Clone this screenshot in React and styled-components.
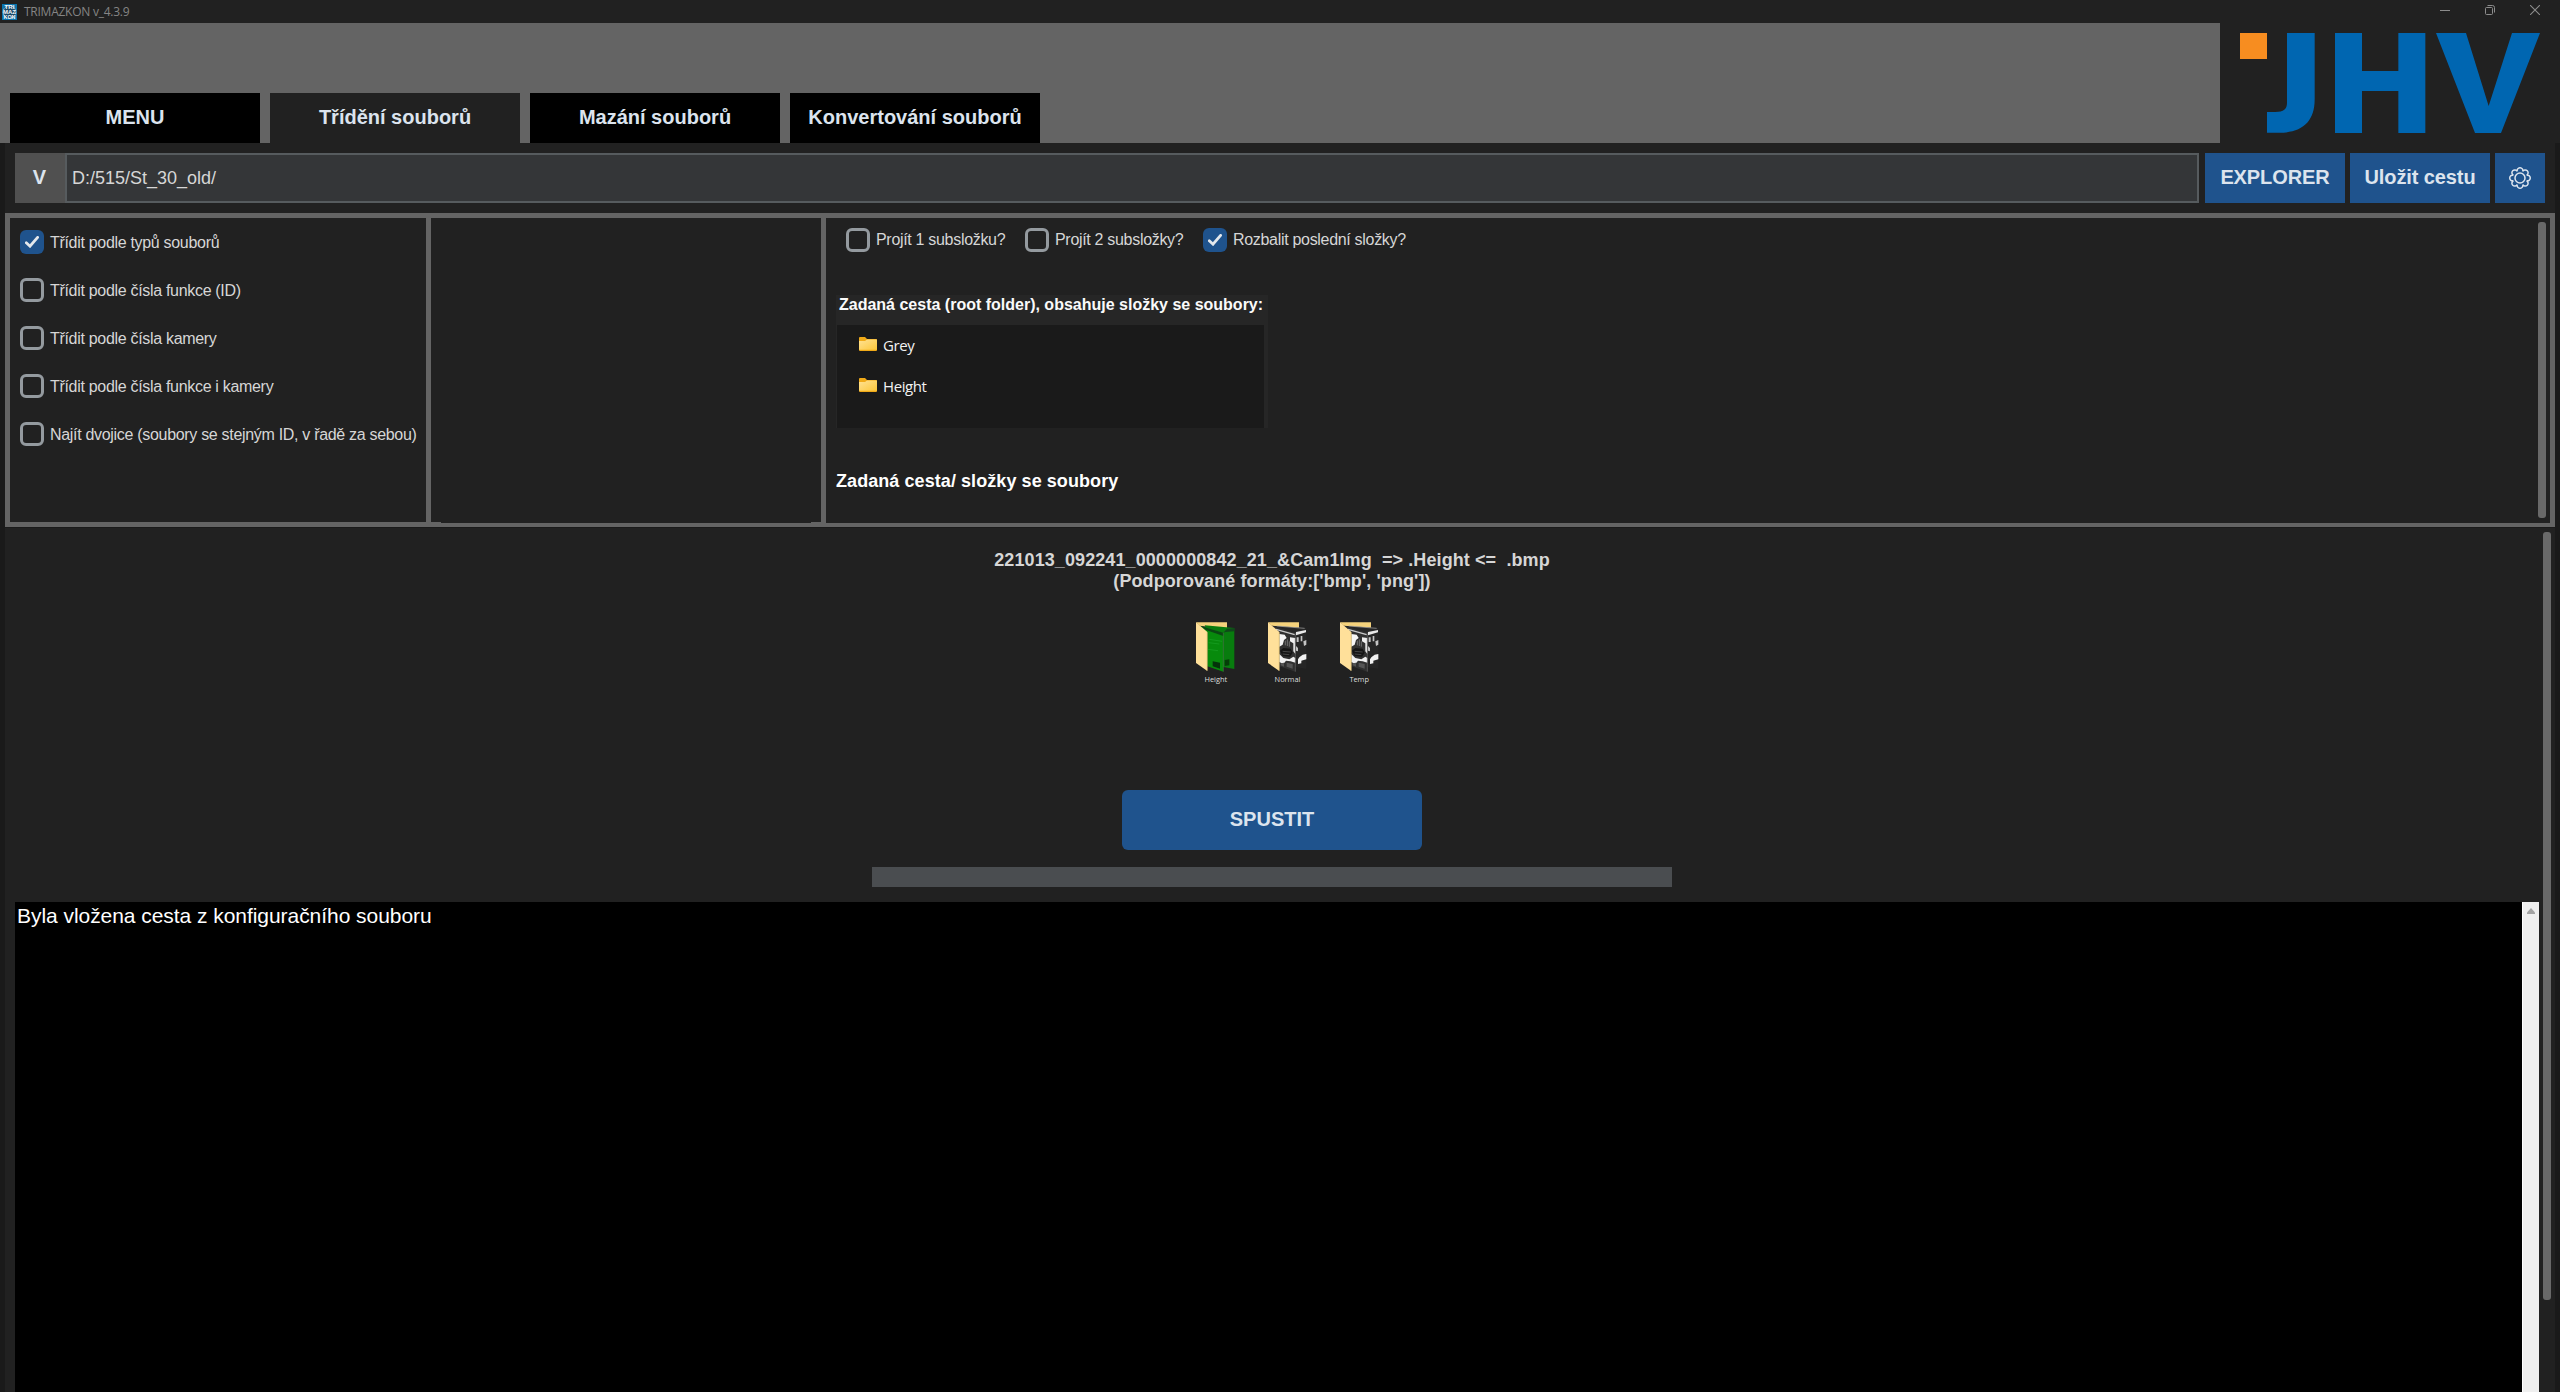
import React from 'react';
import styled, { createGlobalStyle, css } from 'styled-components';

const colors = {
  window: '#212121',
  edge: '#1a1a1a',
  frame: '#646464',
  blue: '#1f538d',
  text: '#d6d6d6',
  buttonText: '#dce4ee',
  checkbox: '#949a9f',
};

const GlobalStyle = createGlobalStyle`
  html, body { margin: 0; padding: 0; background: ${colors.edge}; overflow: hidden; }
  *, *::before, *::after { box-sizing: border-box; }
  button { font: inherit; border: 0; padding: 0; margin: 0; }
`;

const Window = styled.div`
  display: flex;
  flex-direction: column;
  width: 2560px;
  height: 1392px;
  overflow: hidden;
  background: ${colors.edge};
  color: ${colors.text};
  font-family: 'Liberation Sans', Arial, sans-serif;
  white-space: pre;
`;

const TitleBar = styled.header`
  display: flex;
  align-items: center;
  height: 23px;
  flex: none;
  padding: 0 20px 0 2px;
  background: ${colors.window};
`;

const TitleText = styled.span`
  flex: 1;
  margin-left: 6px;
  font-family: 'Open Sans', sans-serif;
  font-size: 12px;
  line-height: 17px;
  letter-spacing: -0.25px;
  color: #858585;
`;

const WindowControls = styled.div`
  display: flex;
  align-items: center;
  gap: 35px;
  padding-bottom: 3px;
  svg { display: block; }
`;

const Header = styled.div`
  display: flex;
  height: 120px;
  flex: none;
`;

const TabBar = styled.nav`
  display: flex;
  align-items: flex-end;
  gap: 10px;
  width: 2220px;
  padding-left: 10px;
  background: ${colors.frame};
`;

const Tab = styled.button`
  width: 250px;
  height: 50px;
  padding-bottom: 2px;
  background: ${(p) => (p.$active ? colors.window : '#000')};
  color: ${colors.buttonText};
  font-size: 20px;
  font-weight: bold;
`;

const LogoPanel = styled.div`
  flex: 1;
  background: ${colors.window};
  padding: 10px 0 0 20px;
  svg { display: block; }
`;

const Body = styled.main`
  display: flex;
  flex-direction: column;
  flex: 1;
  min-height: 0;
  margin: 0 5px;
  background: ${colors.window};
`;

const PathRow = styled.div`
  display: flex;
  height: 70px;
  padding: 10px;
`;

const HistoryButton = styled.button`
  width: 50px;
  padding: 0 1px 2px 0;
  background: #505050;
  color: ${colors.buttonText};
  font-size: 20px;
  font-weight: bold;
`;

const PathEntry = styled.div`
  display: flex;
  align-items: center;
  flex: 1;
  margin-right: 6px;
  padding-left: 5px;
  border: 2px solid #565b5e;
  background: #343638;
  font-size: 18px;
`;

const PathButtons = styled.div`
  display: flex;
  gap: 5px;
`;

const PathButton = styled.button`
  display: flex;
  align-items: center;
  justify-content: center;
  width: ${(p) => (p.$square ? 50 : 140)}px;
  padding-bottom: ${(p) => (p.$square ? 0 : 2)}px;
  background: ${colors.blue};
  color: ${colors.buttonText};
  font-size: 20px;
  font-weight: bold;
  letter-spacing: -0.1px;
`;

const OptionsFrame = styled.section`
  display: flex;
  gap: 5px;
  height: 314px;
  flex: none;
  padding: 5px 5px 4px;
  background: ${colors.frame};
`;

const Panel = styled.div`
  display: flex;
  flex-direction: column;
  background: ${colors.window};
  ${(p) => (p.$width ? css`width: ${p.$width}px;` : css`flex: 1;`)}
`;

const SortPanel = styled(Panel)`
  gap: 24px;
  margin-bottom: 1px;
  padding: 12px 10px;
`;

const EmptyPanel = styled(Panel)`
  justify-content: flex-end;
`;

const PanelCorners = styled.div`
  display: flex;
  justify-content: space-between;
  height: 1px;
  &::before, &::after { content: ''; width: 10px; background: ${colors.frame}; }
`;

const FolderPanel = styled(Panel)`
  flex-direction: row;
  padding: 4px 4px 5px 10px;
`;

const FolderContent = styled.div`
  display: flex;
  flex-direction: column;
  align-items: flex-start;
  flex: 1;
`;

const CheckRow = styled.div`
  display: flex;
  gap: 26px;
  padding: 6px 0 0 10px;
`;

const CheckLabel = styled.label`
  display: flex;
  align-items: center;
  height: 24px;
  width: ${(p) => (p.$width ? `${p.$width}px` : 'auto')};
  gap: 6px;
  font-size: 16px;
  letter-spacing: -0.31px;
`;

const CheckText = styled.span`
  padding-top: ${(p) => (p.$low ? 2 : 0)}px;
`;

const Box = styled.span`
  display: flex;
  align-items: center;
  justify-content: center;
  flex: none;
  width: 24px;
  height: 24px;
  border-radius: 6px;
  ${(p) => (p.$checked ? css`background: ${colors.blue};` : css`border: 3px solid ${colors.checkbox};`)}
`;

const TreeCard = styled.div`
  width: 432px;
  height: 133px;
  margin-top: 43px;
  padding: 0 4px 0 1px;
  background: #262626;
`;

const TreeTitle = styled.div`
  height: 30px;
  padding: 0 0 0 2px;
  font-size: 16px;
  line-height: 19px;
  font-weight: bold;
  color: #fafafa;
`;

const TreeList = styled.div`
  display: flex;
  flex-direction: column;
  gap: 21px;
  height: 103px;
  padding: 9px 0 0 22px;
  background: ${colors.edge};
`;

const TreeItem = styled.div`
  display: flex;
  align-items: center;
  gap: 6px;
  height: 20px;
  font-family: 'Open Sans', sans-serif;
  font-size: 15px;
  line-height: 20px;
  letter-spacing: -0.4px;
  color: #f2f2f2;
  svg { display: block; }
  span { padding-top: 2px; }
`;

const PathSummary = styled.div`
  margin-top: 43px;
  font-size: 18px;
  line-height: 20px;
  font-weight: bold;
  letter-spacing: 0.07px;
  color: #fff;
`;

const ScrollThumb = styled.div`
  width: 8px;
  height: ${(p) => p.$height}px;
  flex: none;
  border-radius: 3px;
  background: #696969;
`;

const Divider = styled.div`
  height: 1px;
  flex: none;
  background: ${colors.edge};
`;

const Workspace = styled.section`
  display: flex;
  flex: 1;
  min-height: 0;
`;

const WorkColumn = styled.div`
  display: flex;
  flex-direction: column;
  align-items: center;
  width: 2534px;
  padding-top: 22px;
`;

const ScrollTrack = styled.div`
  padding: 4px 4px 0;
`;

const NameExample = styled.div`
  text-align: center;
  font-size: 18px;
  line-height: 21px;
  font-weight: bold;
  letter-spacing: 0.09px;
`;

const Thumbnails = styled.div`
  display: flex;
  align-items: flex-start;
  gap: 31.7px;
  height: 198px;
  padding: 30px 0 0 31px;
`;

const Thumbnail = styled.figure`
  display: flex;
  flex-direction: column;
  align-items: center;
  width: 40px;
  margin: 0;
  svg { display: block; }
`;

const ThumbnailName = styled.figcaption`
  margin-top: 2px;
  font-family: 'Open Sans', sans-serif;
  font-size: 7.4px;
  line-height: 10px;
  color: #dedede;
`;

const RunButton = styled.button`
  width: 300px;
  height: 60px;
  flex: none;
  padding-bottom: 2px;
  border-radius: 6px;
  background: ${colors.blue};
  color: ${colors.buttonText};
  font-size: 20px;
  font-weight: bold;
`;

const ProgressBar = styled.div`
  width: 800px;
  height: 20px;
  flex: none;
  margin: 17px 0 15px;
  background: #4a4d50;
`;

const Console = styled.div`
  display: flex;
  align-self: stretch;
  flex: 1;
  margin-left: 10px;
  background: #000;
`;

const ConsoleText = styled.div`
  flex: 1;
  padding: 2px 0 0 2px;
  font-size: 21px;
  line-height: 24px;
  letter-spacing: -0.05px;
  color: #fff;
`;

const ConsoleScroll = styled.div`
  display: flex;
  justify-content: center;
  width: 17px;
  padding-top: 6px;
  background: #efefef;
  border-left: 1px solid #fff;
`;

const AppIcon = () => (
  <svg width="16" height="16" viewBox="0 0 16 16">
    <rect width="15" height="16" fill="#0a73ad" />
    <circle cx="7.5" cy="8" r="6.3" fill="#1d4a68" stroke="#b9d3e2" strokeWidth="1" strokeDasharray="2 1" />
    <g fill="#f2f7fa" fontFamily="Liberation Sans, sans-serif" fontWeight="bold" fontSize="5.4" textAnchor="middle">
      <text x="7.5" y="5.4" textLength="10" lengthAdjust="spacingAndGlyphs">TRI</text>
      <text x="7.5" y="10.2" textLength="13" lengthAdjust="spacingAndGlyphs">MAZ</text>
      <text x="7.5" y="15" textLength="12" lengthAdjust="spacingAndGlyphs">KON</text>
    </g>
  </svg>
);

const MinimizeIcon = () => (
  <svg width="10" height="10" viewBox="0 0 10 10">
    <path d="M0 5.5H10" stroke="#8c8c8c" />
  </svg>
);

const RestoreIcon = () => (
  <svg width="10" height="10" viewBox="0 0 10 10" fill="none" stroke="#8c8c8c">
    <rect x="0.5" y="2.5" width="7" height="7" rx="1" />
    <path d="M2.5 0.5H7.5Q9.5 0.5 9.5 2.5V7.5" />
  </svg>
);

const CloseIcon = () => (
  <svg width="10" height="10" viewBox="0 0 10 10">
    <path d="M0 0L10 10M10 0L0 10" stroke="#8c8c8c" strokeWidth="1.1" />
  </svg>
);

const Logo = () => (
  <svg width="300" height="101" viewBox="180 99 900 303">
    <rect x="180" y="99" width="81" height="78" fill="#f78d20" />
    <g fill="#0066b1">
      <path d="M321 99H404V298C404 366 366 398 298 398.500H261V336H286C311 336 321 327 321 309Z" />
      <path d="M465 99H546V213H655V99H736V399H655V273H546V399H465Z" />
      <path d="M768 99H858L926 318L996 99H1080L963 399H885Z" />
    </g>
  </svg>
);

const gearPath = (() => {
  const point = (i) => {
    const a = ((22.5 + 45 * i) * Math.PI) / 180;
    return `${(11 + 7.1 * Math.sin(a)).toFixed(2)} ${(11 - 7.1 * Math.cos(a)).toFixed(2)}`;
  };
  let d = `M${point(-1)}`;
  for (let i = 0; i < 8; i += 1) d += `A2.85 2.85 0 1 1 ${point(i)}`;
  return `${d}Z`;
})();

const GearIcon = () => (
  <svg width="22" height="22" viewBox="0 0 22 22" fill="none" stroke={colors.buttonText} strokeWidth="1.5">
    <path d={gearPath} />
    <circle cx="11" cy="11" r="5" />
  </svg>
);

const CheckIcon = () => (
  <svg width="14" height="12" viewBox="0 0 14 12">
    <path d="M1.300 6.800L5 10.200L12.600 1.400" fill="none" stroke="#e4e8ec" strokeWidth="2.800" strokeLinecap="round" />
  </svg>
);

const FolderIcon = () => (
  <svg width="18" height="14" viewBox="0 0 18 14">
    <defs>
      <linearGradient id="folder" x1="0" y1="0" x2="1" y2="1">
        <stop offset="0" stopColor="#ffe293" />
        <stop offset="1" stopColor="#fcc73a" />
      </linearGradient>
    </defs>
    <path d="M0 1Q0 0 1 0H6L8 2H17Q18 2 18 3V13Q18 14 17 14H1Q0 14 0 13Z" fill="#f0aa18" />
    <path d="M0 4H6L8 2.600H18V12.800H0Z" fill="url(#folder)" />
  </svg>
);

const GreenPages = () => (
  <>
    <path d="M26 10L115 18V141L82 135Z" fill="#087c0e" />
    <path d="M82 32L93 20L115 18V28L88 30Z" fill="#10481a" />
    <path d="M86 114L100 112V130L86 132Z" fill="#053d08" />
    <path d="M10 11L82 32V149L34 133V32Z" fill="#078a0c" />
    <path d="M10 11L82 32V42L30 24Z" fill="#0b4713" />
    <path d="M38 62L70 66M36 82L66 86M40 52L78 58" stroke="#149a1e" strokeWidth="3" />
    <path d="M50 118L72 122V140L50 133Z" fill="#04330a" />
    <path d="M82 32V149" fill="none" stroke="#4a6a4c" strokeWidth="2" />
  </>
);

const MonoPages = () => (
  <>
    <path d="M10 11L115 18V141L82 135Z" fill="#262626" />
    <path d="M26 12L110 19" stroke="#a8a8a8" strokeWidth="2" />
    <path d="M84 30L114 24V31L84 40Z" fill="#e8e8e8" />
    <path d="M86 46H92V60H86ZM98 42H103V58H98ZM106 58L115 54V68L108 72ZM84 72L90 78V88L84 86Z" fill="#c4c4c4" />
    <path d="M94 106L104 98L115 96V112L100 116V124L90 126V112Z" fill="#f2f2f2" />
    <path d="M10 11L82 32V149L34 133V32Z" fill="#303030" />
    <path d="M24 22L80 38" stroke="#c9c9c9" strokeWidth="4" />
    <path d="M34 36L50 38L56 48L48 54L44 68L34 74Z" fill="#f6f6f6" />
    <path d="M66 46L82 48V96L76 88V64L66 58Z" fill="#efefef" />
    <path d="M52 56V70M58 52V72M64 58V74" stroke="#8f8f8f" strokeWidth="2" />
    <path d="M36 86L46 78L68 80L74 92L66 104L44 102Z" fill="#141414" />
    <path d="M44 88L68 90M44 96L64 98" stroke="#5e5e5e" strokeWidth="2" />
    <path d="M34 96L46 108L64 112L76 104L82 108V122L68 118L54 116L46 126L34 120Z" fill="#f1f1f1" />
    <path d="M38 124L48 122V134L38 130ZM56 122L74 126V140L56 134Z" fill="#555" />
    <path d="M82 32V149" fill="none" stroke="#666" strokeWidth="2" />
  </>
);

const PictureFolder = ({ green }) => (
  <svg width="39" height="50" viewBox="0 0 117 150">
    <path d="M0 1H93V20L10 11Z" fill="#f5d27c" />
    {green ? <GreenPages /> : <MonoPages />}
    <path d="M0 1L34 30V147L0 123Z" fill="#ffe09a" />
    <path d="M33 31V146" stroke="#eccb78" strokeWidth="2" />
  </svg>
);

const Check = ({ label, checked, width, low }) => (
  <CheckLabel $width={width}>
    <Box $checked={checked}>{checked && <CheckIcon />}</Box>
    <CheckText $low={low}>{label}</CheckText>
  </CheckLabel>
);

const tabs = ['MENU', 'Třídění souborů', 'Mazání souborů', 'Konvertování souborů'];

const sortOptions = [
  'Třídit podle typů souborů',
  'Třídit podle čísla funkce (ID)',
  'Třídit podle čísla kamery',
  'Třídit podle čísla funkce i kamery',
  'Najít dvojice (soubory se stejným ID, v řadě za sebou)',
];

export default function App() {
  return (
    <Window>
      <GlobalStyle />
      <TitleBar>
        <AppIcon />
        <TitleText>TRIMAZKON v_4.3.9</TitleText>
        <WindowControls>
          <MinimizeIcon />
          <RestoreIcon />
          <CloseIcon />
        </WindowControls>
      </TitleBar>
      <Header>
        <TabBar>
          {tabs.map((name, i) => (
            <Tab key={name} $active={i === 1}>{name}</Tab>
          ))}
        </TabBar>
        <LogoPanel><Logo /></LogoPanel>
      </Header>
      <Body>
        <PathRow>
          <HistoryButton>V</HistoryButton>
          <PathEntry>D:/515/St_30_old/</PathEntry>
          <PathButtons>
            <PathButton>EXPLORER</PathButton>
            <PathButton>Uložit cestu</PathButton>
            <PathButton $square><GearIcon /></PathButton>
          </PathButtons>
        </PathRow>
        <OptionsFrame>
          <SortPanel $width={416}>
            {sortOptions.map((label, i) => (
              <Check key={label} label={label} checked={i === 0} low />
            ))}
          </SortPanel>
          <EmptyPanel $width={390}><PanelCorners /></EmptyPanel>
          <FolderPanel>
            <FolderContent>
              <CheckRow>
                <Check label="Projít 1 subsložku?" width={153} />
                <Check label="Projít 2 subsložky?" width={152} />
                <Check label="Rozbalit poslední složky?" checked />
              </CheckRow>
              <TreeCard>
                <TreeTitle>Zadaná cesta (root folder), obsahuje složky se soubory:</TreeTitle>
                <TreeList>
                  <TreeItem><FolderIcon /><span>Grey</span></TreeItem>
                  <TreeItem><FolderIcon /><span>Height</span></TreeItem>
                </TreeList>
              </TreeCard>
              <PathSummary>Zadaná cesta/ složky se soubory</PathSummary>
            </FolderContent>
            <ScrollThumb $height={296} />
          </FolderPanel>
        </OptionsFrame>
        <Divider />
        <Workspace>
          <WorkColumn>
            <NameExample>
              <div>{'221013_092241_0000000842_21_&Cam1Img  => .Height <=  .bmp'}</div>
              <div>{"(Podporované formáty:['bmp', 'png'])"}</div>
            </NameExample>
            <Thumbnails>
              <Thumbnail><PictureFolder green /><ThumbnailName>Height</ThumbnailName></Thumbnail>
              <Thumbnail><PictureFolder /><ThumbnailName>Normal</ThumbnailName></Thumbnail>
              <Thumbnail><PictureFolder /><ThumbnailName>Temp</ThumbnailName></Thumbnail>
            </Thumbnails>
            <RunButton>SPUSTIT</RunButton>
            <ProgressBar />
            <Console>
              <ConsoleText>Byla vložena cesta z konfiguračního souboru</ConsoleText>
              <ConsoleScroll>
                <svg width="8" height="6" viewBox="0 0 8 6"><path d="M0 6V4.500L4 0L8 4.500V6Z" fill="#a3a3a3" /></svg>
              </ConsoleScroll>
            </Console>
          </WorkColumn>
          <ScrollTrack><ScrollThumb $height={768} /></ScrollTrack>
        </Workspace>
      </Body>
    </Window>
  );
}
